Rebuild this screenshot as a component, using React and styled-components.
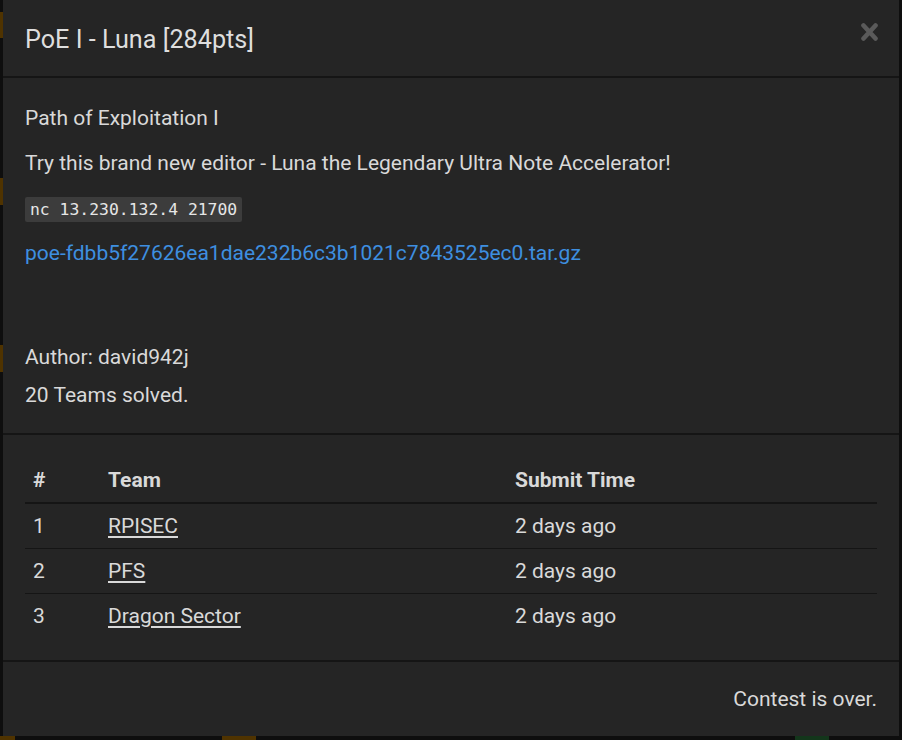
import React from 'react';
import styled, { createGlobalStyle } from 'styled-components';

const GlobalStyle = createGlobalStyle`
  html, body {
    margin: 0;
    padding: 0;
    background: #0e0e0e;
  }
  body {
    font-family: Roboto, "Liberation Sans", sans-serif;
    color: #d9d9d9;
    overflow: hidden;
  }
`;

const Page = styled.div`
  position: relative;
  width: 902px;
  height: 740px;
  background: #0e0e0e;
`;

// bits of the page behind the overlay that peek out at the edges
const Peek = styled.div`
  position: absolute;
  background: ${({ tone }) => (tone === 'green' ? '#13361b' : '#4f3300')};
`;

const Modal = styled.div`
  position: relative;
  margin-left: 3px;
  width: 896px;
  height: 736px;
  background: #252525;
  display: flex;
  flex-direction: column;
`;

const Header = styled.div`
  height: 78px;
  padding: 2px 22px 0;
  display: flex;
  align-items: center;
  justify-content: space-between;
  border-bottom: 2px solid #151515;
  box-sizing: border-box;
  flex-shrink: 0;
`;

const Title = styled.h4`
  margin: 0;
  font-size: 25.2px;
  font-weight: 400;
  color: #dedede;
`;

const Close = styled.svg`
  width: 17px;
  height: 18px;
  margin-top: -14px;
  margin-right: -1px;
`;

const Body = styled.div`
  padding: 25px 22px 19px;
  border-bottom: 2px solid #151515;
`;

const Para = styled.p`
  margin: 0 0 ${({ tight }) => (tight ? '13px' : '15px')};
  font-size: 21px;
  line-height: 30px;
`;

const Code = styled.code`
  font-family: "DejaVu Sans Mono", "Liberation Mono", monospace;
  font-size: 16.4px;
  background: #3c3c3c;
  color: #e6e6e6;
  padding: 3px 5px;
  border-radius: 2px;
`;

const FileLink = styled.a`
  color: #3e8fe0;
  text-decoration: none;
  font-size: 21px;
`;

const Gap = styled.div`
  height: 55px;
`;

const Meta = styled.div`
  font-size: 21px;
  line-height: 38px;
`;

const Solves = styled.div`
  padding: 22px 22px 0;
  flex: 1;
  border-bottom: 2px solid #151515;
`;

const Table = styled.table`
  width: 100%;
  border-collapse: collapse;
  font-size: 21px;
`;

const Th = styled.th`
  text-align: left;
  font-weight: 700;
  height: 45px;
  padding: 0 0 0 ${({ first }) => (first ? '8px' : '0')};
  border-bottom: 2px solid #151515;
  width: ${({ w }) => w || 'auto'};
  vertical-align: middle;
`;

const Td = styled.td`
  height: 44px;
  padding: 0 0 0 ${({ first }) => (first ? '8px' : '0')};
  border-top: ${({ top }) => (top ? 'none' : '1px solid #151515')};
  vertical-align: middle;
`;

const TeamLink = styled.a`
  color: #d9d9d9;
  text-decoration: underline;
  text-underline-offset: 3px;
`;

const Footer = styled.div`
  height: 74px;
  padding: 0 22px;
  display: flex;
  align-items: center;
  justify-content: flex-end;
  font-size: 21px;
  flex-shrink: 0;
`;

const solves = [
  { rank: 1, team: 'RPISEC', time: '2 days ago' },
  { rank: 2, team: 'PFS', time: '2 days ago' },
  { rank: 3, team: 'Dragon Sector', time: '2 days ago' },
];

export default function App() {
  return (
    <Page>
      <GlobalStyle />
      <Peek style={{ left: 0, top: 12, width: 3, height: 26 }} />
      <Peek style={{ left: 0, top: 178, width: 3, height: 27 }} />
      <Peek style={{ left: 0, top: 345, width: 3, height: 27 }} />
      <Peek style={{ left: 0, top: 736, width: 15, height: 4 }} />
      <Peek style={{ left: 222, top: 736, width: 34, height: 4 }} />
      <Peek tone="green" style={{ left: 795, top: 736, width: 34, height: 4 }} />
      <Modal>
        <Header>
          <Title>PoE I - Luna [284pts]</Title>
          <Close viewBox="0 0 17 18" aria-label="close">
            <path
              d="M2.5 2.5 L14.5 15.5 M14.5 2.5 L2.5 15.5"
              stroke="#5a5a5a"
              strokeWidth="4.6"
              strokeLinecap="round"
            />
          </Close>
        </Header>
        <Body>
          <Para>Path of Exploitation I</Para>
          <Para>Try this brand new editor - Luna the Legendary Ultra Note Accelerator!</Para>
          <Para tight>
            <Code>nc 13.230.132.4 21700</Code>
          </Para>
          <Para>
            <FileLink href="#">poe-fdbb5f27626ea1dae232b6c3b1021c7843525ec0.tar.gz</FileLink>
          </Para>
          <Gap />
          <Meta>Author: david942j</Meta>
          <Meta>20 Teams solved.</Meta>
        </Body>
        <Solves>
          <Table>
            <thead>
              <tr>
                <Th first w="75px">#</Th>
                <Th w="407px">Team</Th>
                <Th>Submit Time</Th>
              </tr>
            </thead>
            <tbody>
              {solves.map((s, i) => (
                <tr key={s.rank}>
                  <Td first top={i === 0}>{s.rank}</Td>
                  <Td top={i === 0}>
                    <TeamLink href="#">{s.team}</TeamLink>
                  </Td>
                  <Td top={i === 0}>{s.time}</Td>
                </tr>
              ))}
            </tbody>
          </Table>
        </Solves>
        <Footer>Contest is over.</Footer>
      </Modal>
    </Page>
  );
}
